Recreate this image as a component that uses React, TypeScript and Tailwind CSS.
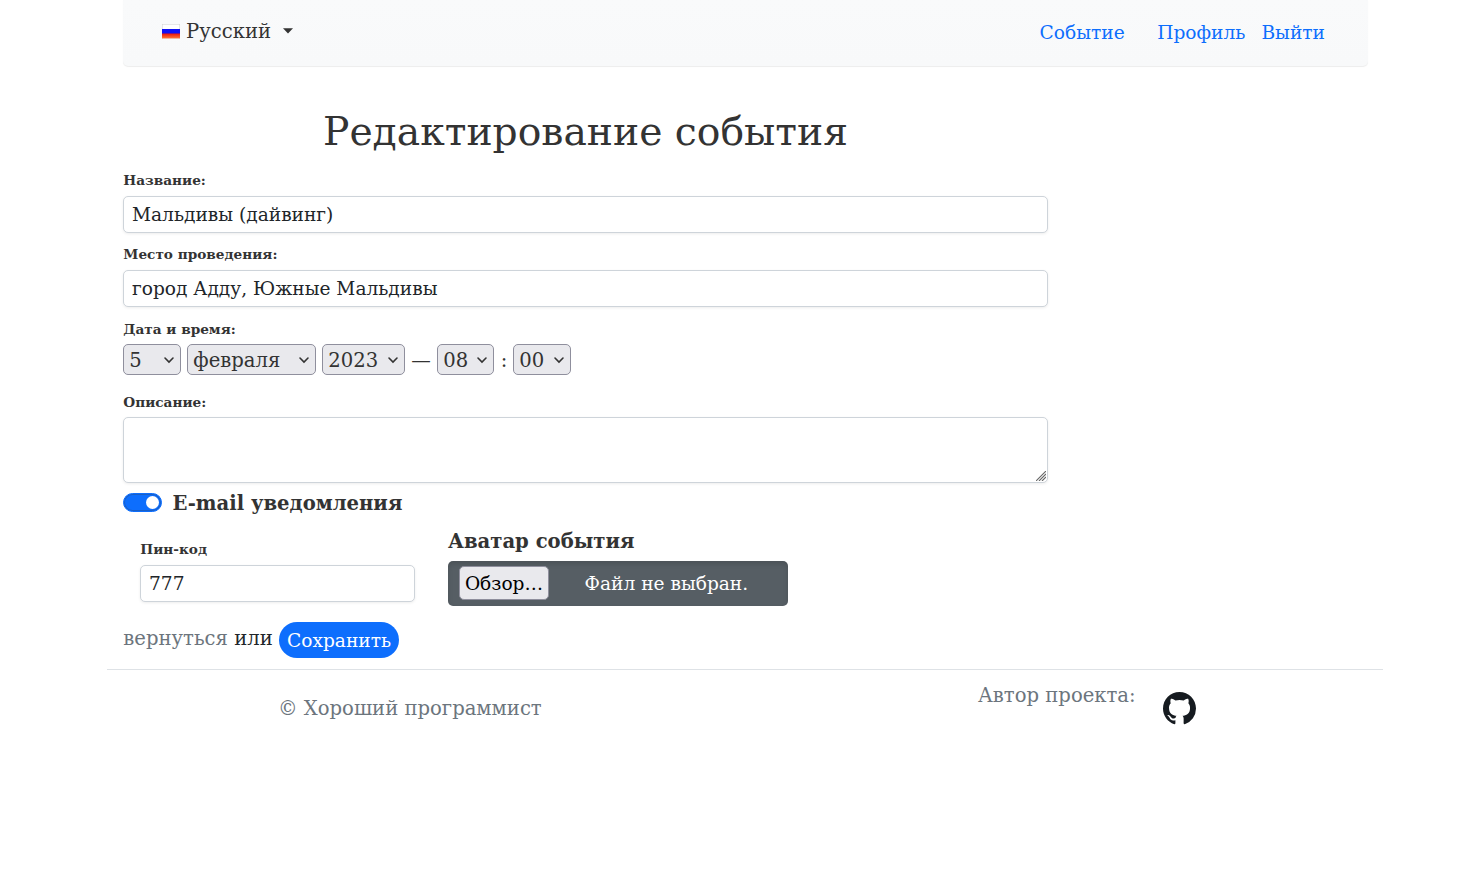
const field =
  'block h-[37px] w-full rounded-[5px] border border-[#ced4da] bg-white px-2 text-[18.58px] text-[#212529] shadow-[0_1px_3px_rgba(0,0,0,0.075)] outline-none';

function Label({ children }: { children: string }) {
  return <label className="block pl-[0.3px] text-[13.65px] leading-5 font-bold">{children}</label>;
}

function Choice({ value, className }: { value: string; className: string }) {
  return (
    <button
      type="button"
      className={`flex h-[31px] shrink-0 items-center justify-between rounded-[5px] border border-[#8f8f9d] bg-[#e9e9ed] pr-[5px] pl-[5.3px] leading-[29px] ${className}`}
    >
      <span className="pt-[2px]">{value}</span>
      <svg width="12" height="12" viewBox="0 0 12 12" fill="none" stroke="currentColor" strokeWidth="1.6" strokeLinecap="round">
        <path d="M2 4 6 8.1 10 4" />
      </svg>
    </button>
  );
}

function Flag() {
  return (
    <svg className="mb-[2px]" width="18" height="15" viewBox="0 0 18 15">
      <defs>
        <linearGradient id="flag-red" x1="0" y1="0" x2="0" y2="1">
          <stop offset="0" stopColor="#e8140c" />
          <stop offset="1" stopColor="#ff7436" />
        </linearGradient>
      </defs>
      <rect x="0.25" y="0.25" width="17.5" height="14.5" fill="#fff" stroke="#d0d0d0" strokeWidth="0.5" />
      <rect y="5" width="18" height="5" fill="#1010f5" />
      <rect y="9.5" width="18" height="4.9" fill="url(#flag-red)" />
    </svg>
  );
}

export default function App() {
  return (
    <div className="min-h-screen bg-white pl-[107px] font-['DejaVu_Serif',serif] text-[19.6px] leading-[30px] text-[#333]">
      <div className="w-[1276px]">
        <nav className="mx-auto flex h-[66px] w-[1245px] items-start justify-between rounded-b-[5px] bg-[#f8f9fa] bg-linear-to-b from-[#f9fafb] to-[#f8f9fa] pt-[17px] pr-[42.5px] pl-[39.5px] shadow-[0_1px_1px_rgba(0,0,0,0.075)]">
          <button type="button" className="flex items-center">
            <Flag />
            <span className="ml-[6px]">Русский</span>
            <svg className="mb-[2px] ml-3" width="10" height="6" viewBox="0 0 10 6" fill="currentColor">
              <path d="M0 .3h10L5 5.5z" />
            </svg>
          </button>
          <div className="flex pt-[2px] text-[18.6px] leading-[28px] text-[#0d6efd]">
            <a href="#event">Событие</a>
            <a href="#profile" className="ml-[32.6px]">Профиль</a>
            <a href="#exit" className="ml-4">Выйти</a>
          </div>
        </nav>

        <form className="pl-4">
          <div className="w-[925px]">
            <h1 className="pt-[42px] text-center text-[39.25px] leading-[47px]">Редактирование события</h1>
            <div className="pt-[15px]">
              <Label>Название:</Label>
              <input className={`${field} mt-[6px]`} defaultValue="Мальдивы (дайвинг)" />
            </div>
            <div className="pt-[11px]">
              <Label>Место проведения:</Label>
              <input className={`${field} mt-[6px]`} defaultValue="город Адду, Южные Мальдивы" />
            </div>
            <div className="pt-3">
              <Label>Дата и время:</Label>
              <div className="mt-[5px] flex h-[31px] items-center">
                <Choice value="5" className="w-[58px]" />
                <Choice value="февраля" className="ml-[6px] w-[129px]" />
                <Choice value="2023" className="ml-[6px] w-[83px]" />
                <span className="w-8 pt-[2px] text-center">—</span>
                <Choice value="08" className="w-[57px]" />
                <span className="w-[19px] pt-[2px] pl-[1px] text-center">:</span>
                <Choice value="00" className="w-[58px]" />
              </div>
            </div>
            <div className="pt-[17px]">
              <Label>Описание:</Label>
              <div className="relative mt-[5px]">
                <textarea className={`${field} h-[66px] resize-none`} />
                <svg className="absolute right-[2px] bottom-[2px]" width="10" height="10" viewBox="0 0 10 10" stroke="#666" strokeWidth="1.1">
                  <path d="M0 10 10 0M3 10l7-7M6 10l4-4" />
                </svg>
              </div>
            </div>
          </div>

          <div className="flex h-[39px] items-center">
            <span className="flex h-[19px] w-[39px] items-center justify-end rounded-full border border-[#0d6efd] bg-[#0d6efd] pr-[2px] shadow-[inset_0_0_0_1px_#1b5fc4]">
              <span className="size-[13px] rounded-full bg-white" />
            </span>
            <span className="ml-[10.4px] pt-[2px] font-bold">E-mail уведомления</span>
          </div>

          <div className="flex h-[84px] items-start">
            <div className="ml-[17px] w-[275px] pt-[17px]">
              <Label>Пин-код</Label>
              <input className={`${field} mt-[6px]`} defaultValue="777" />
            </div>
            <div className="ml-[33px] w-[340px] pt-[5px]">
              <div className="font-bold">Аватар события</div>
              <div className="mt-1 flex h-[45px] items-start rounded-[5px] bg-[#565e64] pt-[5px] pl-[11px] text-[18.58px] text-white shadow-[inset_0_3px_5px_rgba(0,0,0,0.125)]">
                <button type="button" className="h-[34px] w-[90px] rounded-[5px] border border-[#8f8f9d] bg-[#e9e9ed] pt-[1px] whitespace-nowrap text-black">
                  Обзор…
                </button>
                <span className="ml-[35.6px] pt-[3px]">Файл не выбран.</span>
              </div>
            </div>
          </div>

          <div className="flex h-[63px] items-start pt-4">
            <a href="#back" className="pt-[2px] pl-[0.3px] text-[#6c757d]">вернуться</a>
            <span className="ml-[6.3px] pt-[2px] text-[#212529]">или</span>
            <button type="button" className="ml-[6.3px] h-9 w-[120px] rounded-full bg-[#0d6efd] pt-[2px] text-[18.58px] text-white">
              Сохранить
            </button>
          </div>
        </form>

        <footer className="flex items-start border-t border-[#dee2e6] text-[#6c757d]">
          <span className="ml-[171px] w-[700px] pt-[24px]">© Хороший программист</span>
          <span className="w-[185px] pt-[11px]">Автор проекта:</span>
          <svg className="mt-[22px]" width="33" height="33" viewBox="0 0 16 16" fill="#161b20">
            <path d="M8 0C3.58 0 0 3.58 0 8c0 3.54 2.29 6.53 5.47 7.59.4.07.55-.17.55-.38 0-.19-.01-.82-.01-1.49-2.01.37-2.53-.49-2.69-.94-.09-.23-.48-.94-.82-1.13-.28-.15-.68-.52-.01-.53.63-.01 1.08.58 1.23.82.72 1.21 1.87.87 2.33.66.07-.52.28-.87.51-1.07-1.78-.2-3.64-.89-3.64-3.95 0-.87.31-1.59.82-2.15-.08-.2-.36-1.02.08-2.12 0 0 .67-.21 2.2.82.64-.18 1.32-.27 2-.27s1.36.09 2 .27c1.53-1.04 2.2-.82 2.2-.82.44 1.1.16 1.92.08 2.12.51.56.82 1.27.82 2.15 0 3.07-1.87 3.75-3.65 3.95.29.25.54.73.54 1.48 0 1.07-.01 1.93-.01 2.2 0 .21.15.46.55.38A8.01 8.01 0 0 0 16 8c0-4.42-3.58-8-8-8z" />
          </svg>
        </footer>
      </div>
    </div>
  );
}
